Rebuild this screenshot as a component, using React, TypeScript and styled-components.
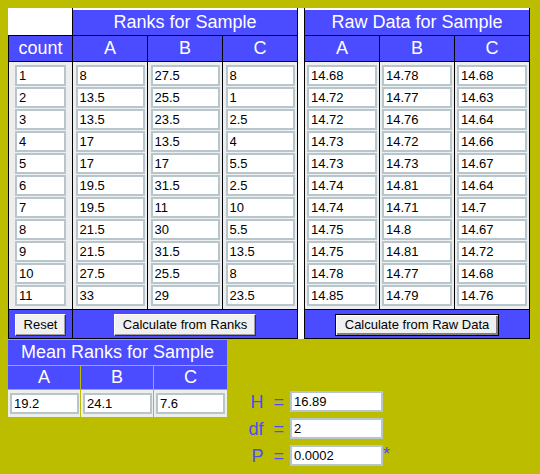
import React from 'react';
import styled, { createGlobalStyle } from 'styled-components';

const GlobalStyle = createGlobalStyle`
    body {
        margin: 8px;
        background: #bdbd00;
        font-family: "Liberation Sans", Arial, sans-serif;
    }
`;

const BLUE = '#4b4bff';

const Page = styled.div`
    display: flex;
    flex-direction: column;
    align-items: flex-start;
`;

const DataArea = styled.div`
    display: flex;
    gap: 6px;
    background: #fff;
`;

const SampleGrid = styled.div<{ $cols: string }>`
    display: grid;
    grid-template-columns: ${(p) => p.$cols};
    grid-template-rows: 27px 25px 247px 28px;
    gap: 1px;
    padding: 0 1px 1px 1px;
    background: #000;
`;

const Corner = styled.div`
    background: #fff;
    margin-left: -1px;
`;

const TitleCell = styled.div<{ $span: number }>`
    grid-column: span ${(p) => p.$span};
    box-sizing: border-box;
    border-top: 2px solid #fff;
    background: ${BLUE};
    color: #fff;
    font-size: 18px;
    display: flex;
    align-items: center;
    justify-content: center;
`;

const HeadCell = styled.div`
    background: ${BLUE};
    color: #fff;
    font-size: 18px;
    display: flex;
    align-items: center;
    justify-content: center;
`;

const ColumnCell = styled.div`
    background: #eeeeee;
    display: flex;
    flex-direction: column;
    align-items: center;
    gap: 1px;
    padding-top: 3px;
`;

const Field = styled.input<{ $w: number }>`
    width: ${(p) => p.$w}px;
    height: 21px;
    box-sizing: border-box;
    border: 2px solid #b7c5cd;
    padding: 0 2px;
    margin: 0;
    background: #fff;
    font-family: "Liberation Sans", Arial, sans-serif;
    font-size: 13px;
    color: #000;
    outline: none;
`;

const ButtonCell = styled.div<{ $span: number }>`
    grid-column: span ${(p) => p.$span};
    background: ${BLUE};
    display: flex;
    align-items: center;
    justify-content: center;
`;

const Button = styled.button<{ $default?: boolean }>`
    height: 22px;
    box-sizing: border-box;
    padding: 0 ${(p) => (p.$default ? 9 : 8)}px;
    margin-top: 1px;
    background: #f0f0f0;
    border: 1px solid;
    border-color: ${(p) => (p.$default ? '#000' : '#fff #303030 #303030 #fff')};
    box-shadow: ${(p) =>
        p.$default
            ? 'inset 1px 1px #fff, inset -2px -2px #808080'
            : 'inset -1px -1px #a0a0a0'};
    font-family: "Liberation Sans", Arial, sans-serif;
    font-size: 13px;
    color: #000;
`;

const BottomRow = styled.div`
    display: flex;
    align-items: flex-start;
    margin-top: 1px;
`;

const MeanGrid = styled.div`
    display: grid;
    grid-template-columns: 72px 72px 73px;
    grid-template-rows: 25px 23px 27px;
    gap: 1px;
`;

const MeanTitle = styled(HeadCell)`
    grid-column: span 3;
`;

const MeanValueCell = styled.div`
    background: #efefe9;
    display: flex;
    align-items: center;
    padding-left: 2px;
`;

const Stats = styled.div`
    display: grid;
    grid-template-columns: 51px 93px 12px;
    grid-auto-rows: 22px;
    column-gap: 6px;
    row-gap: 5px;
    margin-top: 51px;
    margin-left: 6px;
`;

const StatLabel = styled.div`
    color: ${BLUE};
    font-size: 18px;
    text-align: right;
    white-space: nowrap;
    line-height: 22px;
`;

const Star = styled.div`
    color: ${BLUE};
    font-size: 18px;
    line-height: 18px;
    margin-left: -6px;
`;

const ranks = {
    A: ['8', '13.5', '13.5', '17', '17', '19.5', '19.5', '21.5', '21.5', '27.5', '33'],
    B: ['27.5', '25.5', '23.5', '13.5', '17', '31.5', '11', '30', '31.5', '25.5', '29'],
    C: ['8', '1', '2.5', '4', '5.5', '2.5', '10', '5.5', '13.5', '8', '23.5'],
};

const raw = {
    A: ['14.68', '14.72', '14.72', '14.73', '14.73', '14.74', '14.74', '14.75', '14.75', '14.78', '14.85'],
    B: ['14.78', '14.77', '14.76', '14.72', '14.73', '14.81', '14.71', '14.8', '14.81', '14.77', '14.79'],
    C: ['14.68', '14.63', '14.64', '14.66', '14.67', '14.64', '14.7', '14.67', '14.72', '14.68', '14.76'],
};

const counts = Array.from({ length: 11 }, (_, i) => String(i + 1));

const Column = ({ values, width }: { values: string[]; width: number }) => (
    <ColumnCell>
        {values.map((v, i) => (
            <Field key={i} $w={width} defaultValue={v} />
        ))}
    </ColumnCell>
);

const App = () => {
    return (
        <Page>
            <GlobalStyle />
            <DataArea>
                <SampleGrid $cols="63px 74px 74px 74px">
                    <Corner />
                    <TitleCell $span={3}>Ranks for Sample</TitleCell>
                    <HeadCell>count</HeadCell>
                    <HeadCell>A</HeadCell>
                    <HeadCell>B</HeadCell>
                    <HeadCell>C</HeadCell>
                    <Column values={counts} width={51} />
                    <Column values={ranks.A} width={69} />
                    <Column values={ranks.B} width={69} />
                    <Column values={ranks.C} width={69} />
                    <ButtonCell $span={1}>
                        <Button>Reset</Button>
                    </ButtonCell>
                    <ButtonCell $span={3}>
                        <Button>Calculate from Ranks</Button>
                    </ButtonCell>
                </SampleGrid>
                <SampleGrid $cols="74px 74px 74px">
                    <TitleCell $span={3}>Raw Data for Sample</TitleCell>
                    <HeadCell>A</HeadCell>
                    <HeadCell>B</HeadCell>
                    <HeadCell>C</HeadCell>
                    <Column values={raw.A} width={70} />
                    <Column values={raw.B} width={70} />
                    <Column values={raw.C} width={70} />
                    <ButtonCell $span={3}>
                        <Button $default>Calculate from Raw Data</Button>
                    </ButtonCell>
                </SampleGrid>
            </DataArea>
            <BottomRow>
                <MeanGrid>
                    <MeanTitle>Mean Ranks for Sample</MeanTitle>
                    <HeadCell>A</HeadCell>
                    <HeadCell>B</HeadCell>
                    <HeadCell>C</HeadCell>
                    <MeanValueCell>
                        <Field $w={69} defaultValue="19.2" />
                    </MeanValueCell>
                    <MeanValueCell>
                        <Field $w={69} defaultValue="24.1" />
                    </MeanValueCell>
                    <MeanValueCell>
                        <Field $w={69} defaultValue="7.6" />
                    </MeanValueCell>
                </MeanGrid>
                <Stats>
                    <StatLabel>H&nbsp; =</StatLabel>
                    <Field $w={93} defaultValue="16.89" />
                    <div />
                    <StatLabel>df&nbsp; =</StatLabel>
                    <Field $w={93} defaultValue="2" />
                    <div />
                    <StatLabel>P&nbsp; =</StatLabel>
                    <Field $w={93} defaultValue="0.0002" />
                    <Star>*</Star>
                </Stats>
            </BottomRow>
        </Page>
    );
};

export default App;
